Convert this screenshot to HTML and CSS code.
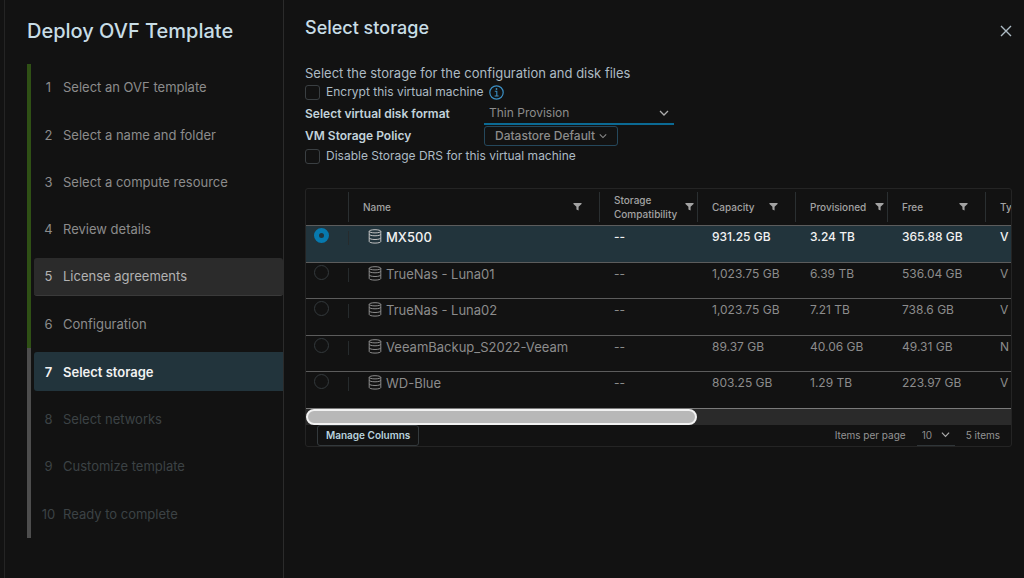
FILE: index.html
```html
<!doctype html>
<html lang="en">
<head>
    <meta charset="utf-8">
    <title>Deploy OVF Template</title>
    <link rel="stylesheet" href="styles.css">
</head>
<body>

<!-- shared icons -->
<svg class="defs" width="0" height="0">
    <symbol id="filter" viewBox="0 0 10 10">
        <path d="M0.5 1h9v1.3L6.2 5.4V9.5L3.8 8.3V5.4L0.5 2.3z" fill="currentColor"/>
    </symbol>
    <symbol id="store" viewBox="0 0 14 15">
        <g fill="none" stroke="currentColor" stroke-width="1">
            <ellipse cx="7" cy="2.3" rx="5.8" ry="1.6"/>
            <path d="M1.2 2.3v10.2c0 .9 2.6 1.6 5.8 1.6s5.8-.7 5.8-1.6V2.3"/>
            <path d="M1.2 5.2c0 .9 2.6 1.6 5.8 1.6s5.8-.7 5.8-1.6M1.2 8.9c0 .9 2.6 1.6 5.8 1.6s5.8-.7 5.8-1.6"/>
        </g>
    </symbol>
    <symbol id="caret" viewBox="0 0 10 10">
        <path d="M1 3l4 4 4-4" fill="none" stroke="currentColor" stroke-width="1.3"/>
    </symbol>
</svg>

<div class="wizard">
    <!-- left side: steps -->
    <aside class="side">
        <h1>Deploy OVF Template</h1>
        <ol class="steps">
            <li class="done"><a href="#"><span>1</span>Select an OVF template</a></li>
            <li class="done"><a href="#"><span>2</span>Select a name and folder</a></li>
            <li class="done"><a href="#"><span>3</span>Select a compute resource</a></li>
            <li class="done"><a href="#"><span>4</span>Review details</a></li>
            <li class="done hover"><a href="#"><span>5</span>License agreements</a></li>
            <li class="done"><a href="#"><span>6</span>Configuration</a></li>
            <li class="current"><a href="#"><span>7</span>Select storage</a></li>
            <li><a href="#"><span>8</span>Select networks</a></li>
            <li><a href="#"><span>9</span>Customize template</a></li>
            <li><a href="#"><span>10</span>Ready to complete</a></li>
        </ol>
    </aside>

    <!-- right side: current page -->
    <main class="page">
        <header class="top">
            <h2>Select storage</h2>
            <button class="close" type="button" aria-label="Close">
                <svg width="12" height="12" viewBox="0 0 12 12"><path d="M1 1l10 10M11 1L1 11" stroke="currentColor" stroke-width="1.4"/></svg>
            </button>
        </header>

        <form class="form">
            <p>Select the storage for the configuration and disk files</p>
            <div class="check">
                <input type="checkbox" id="encrypt">
                <label for="encrypt">Encrypt this virtual machine</label>
                <svg class="info" width="15" height="15" viewBox="0 0 15 15">
                    <circle cx="7.5" cy="7.5" r="6.7" fill="none" stroke="currentColor" stroke-width="1.2"/>
                    <path d="M5.8 6.3h2v4.6M5.6 11h4" fill="none" stroke="currentColor" stroke-width="1.1"/>
                    <circle cx="7.5" cy="4" r="0.9" fill="currentColor"/>
                </svg>
            </div>
            <div class="fields">
                <div class="field">
                    <label for="format">Select virtual disk format</label>
                    <div class="select format">
                        <select id="format"><option>Thin Provision</option></select>
                        <svg width="10" height="10"><use href="#caret"/></svg>
                    </div>
                </div>
                <div class="field">
                    <label for="policy">VM Storage Policy</label>
                    <button class="policy" id="policy" type="button">Datastore Default
                        <svg width="8" height="8"><use href="#caret"/></svg>
                    </button>
                </div>
            </div>
            <div class="check">
                <input type="checkbox" id="drs">
                <label for="drs">Disable Storage DRS for this virtual machine</label>
            </div>
        </form>

        <section class="grid">
            <div class="scroll">
                <table>
                    <colgroup>
                        <col class="c-pick"><col class="c-name"><col class="c-compat"><col class="c-cap">
                        <col class="c-prov"><col class="c-free"><col class="c-type">
                    </colgroup>
                    <thead>
                        <tr>
                            <th></th>
                            <th><div>Name<svg><use href="#filter"/></svg></div></th>
                            <th class="tight"><div>Storage Compatibility<svg><use href="#filter"/></svg></div></th>
                            <th><div>Capacity<svg><use href="#filter"/></svg></div></th>
                            <th class="tight"><div>Provisioned<svg><use href="#filter"/></svg></div></th>
                            <th><div>Free<svg><use href="#filter"/></svg></div></th>
                            <th><div>Ty</div></th>
                        </tr>
                    </thead>
                    <tbody>
                        <tr class="selected">
                            <td class="pick"><input type="radio" name="ds" aria-label="MX500" checked></td>
                            <td class="name"><svg><use href="#store"/></svg>MX500</td>
                            <td>--</td><td>931.25 GB</td><td>3.24 TB</td><td>365.88 GB</td><td>V</td>
                        </tr>
                        <tr>
                            <td class="pick"><input type="radio" name="ds" aria-label="TrueNas - Luna01"></td>
                            <td class="name"><svg><use href="#store"/></svg>TrueNas - Luna01</td>
                            <td>--</td><td>1,023.75 GB</td><td>6.39 TB</td><td>536.04 GB</td><td>V</td>
                        </tr>
                        <tr>
                            <td class="pick"><input type="radio" name="ds" aria-label="TrueNas - Luna02"></td>
                            <td class="name"><svg><use href="#store"/></svg>TrueNas - Luna02</td>
                            <td>--</td><td>1,023.75 GB</td><td>7.21 TB</td><td>738.6 GB</td><td>V</td>
                        </tr>
                        <tr>
                            <td class="pick"><input type="radio" name="ds" aria-label="VeeamBackup_S2022-Veeam"></td>
                            <td class="name"><svg><use href="#store"/></svg>VeeamBackup_S2022-Veeam</td>
                            <td>--</td><td>89.37 GB</td><td>40.06 GB</td><td>49.31 GB</td><td>N</td>
                        </tr>
                        <tr>
                            <td class="pick"><input type="radio" name="ds" aria-label="WD-Blue"></td>
                            <td class="name"><svg><use href="#store"/></svg>WD-Blue</td>
                            <td>--</td><td>803.25 GB</td><td>1.29 TB</td><td>223.97 GB</td><td>V</td>
                        </tr>
                    </tbody>
                </table>
            </div>
            <div class="bar"><div class="thumb"></div></div>
            <footer class="foot">
                <button class="manage" type="button">Manage Columns</button>
                <label for="size">Items per page</label>
                <div class="select size">
                    <select id="size"><option>10</option></select>
                    <svg width="9" height="9"><use href="#caret"/></svg>
                </div>
                <span>5 items</span>
            </footer>
        </section>
    </main>
</div>

</body>
</html>
```
FILE: styles.css
```css
* {
    box-sizing: border-box;
    margin: 0;
    padding: 0;
}
body {
    background: #121212;
    color: #adbbc4;
    font: 13px/16px Inter, "Open Sans", sans-serif;
}
button, select {
    font: inherit;
    color: inherit;
    background: none;
    border: 0;
    appearance: none;
}
.defs {
    position: absolute;
}
.wizard {
    display: flex;
    min-height: 100vh;
    margin-left: 4px;
    border-left: 1px solid #242424;
}

/* steps */
.side {
    display: flex;
    flex-direction: column;
    flex: 0 0 279px;
    padding: 16px 0 40px 22px;
    border-right: 1px solid #2b2b2b;
}
h1 {
    height: 48px;
    font-size: 20px;
    line-height: 30px;
    font-weight: 500;
    color: #c8dde6;
}
.steps {
    display: grid;
    grid-auto-rows: 1fr;
    flex: 1;
    list-style: none;
}
.steps li {
    display: flex;
    padding: 4px 0 5px 3px;
    border-left: 4px solid #4d4d4d;
}
.steps li.done {
    border-color: #2f5015;
}
.steps a {
    display: flex;
    flex: 1;
    align-items: center;
    gap: 6px;
    padding-left: 6px;
    border-radius: 3px;
    color: #3c4245;
    text-decoration: none;
}
.steps span {
    width: 17px;
    text-align: center;
}
.steps .done a {
    color: #8c8c8c;
}
.steps .hover a {
    background: #2b2b2b;
    border-bottom: 1px solid #3a3a3a;
    color: #b3b3b3;
}
.steps .current a {
    background: #22343c;
    border-radius: 3px 0 0 3px;
    color: #f2f2f2;
    font-weight: 600;
}

/* page */
.page {
    flex: 1;
    min-width: 0;
    padding: 16px 12px 24px 21px;
}
.top {
    display: flex;
    justify-content: space-between;
    height: 48px;
}
h2 {
    font-size: 18px;
    line-height: 24px;
    font-weight: 500;
    color: #c8dde6;
}
.close {
    height: 30px;
    color: #adbbc4;
}
.close svg {
    display: block;
}
.form {
    padding-bottom: 24px;
}
.form p {
    height: 20px;
    line-height: 18px;
}
.check {
    display: flex;
    align-items: center;
    gap: 6px;
    height: 16px;
    font-size: 12px;
}
.check input {
    appearance: none;
    width: 15px;
    height: 15px;
    border: 1px solid #3a3f42;
    border-radius: 3px;
}
.info {
    color: #3b8fc4;
}
.fields {
    padding: 3px 0 1px;
}
.field {
    display: flex;
    align-items: center;
    height: 22px;
    font-size: 12px;
}
.field label {
    width: 179px;
    font-weight: 600;
    color: #c2d2da;
}
.select {
    display: flex;
    align-items: center;
    position: relative;
    color: #8c8c8c;
}
.select select {
    width: 100%;
}
.select svg {
    position: absolute;
    right: 5px;
    color: #adadad;
}
.format {
    width: 190px;
    height: 22px;
    border-bottom: 2px solid #0b6a94;
}
.format select {
    padding-left: 5px;
}
.policy {
    display: flex;
    align-items: center;
    gap: 4px;
    height: 20px;
    padding: 0 10px;
    border: 1px solid #25485c;
    border-radius: 3px;
    color: #8c8c8c;
    font-weight: 500;
}

/* datastore table */
.grid {
    border: 1px solid #242424;
    border-radius: 3px;
}
.scroll {
    overflow: hidden;
}
table {
    width: 1271px;
    table-layout: fixed;
    border-collapse: collapse;
}
.c-pick { width: 42px; }
.c-name { width: 251px; }
.c-compat { width: 98px; }
.c-cap { width: 98px; }
.c-prov { width: 92px; }
.c-free { width: 98px; }
th {
    height: 36px;
    padding: 2px 0;
    font-size: 10px;
    line-height: 14px;
    font-weight: 500;
    text-align: left;
    color: #a3a3a3;
}
th div {
    display: flex;
    align-items: center;
    justify-content: space-between;
    height: 30px;
    padding: 0 17px 0 14px;
    border-left: 1px solid #2a2f31;
}
th.tight div {
    padding-right: 3px;
}
th svg {
    flex: none;
    width: 9px;
    height: 9px;
}
tbody tr {
    height: 37px;
    border-top: 1px solid #5c5c5c;
}
tbody tr:nth-child(even) {
    height: 36px;
}
tbody tr:last-child {
    border-bottom: 1px solid #7a7a7a;
}
td {
    padding: 2px 0 0 15px;
    line-height: 18px;
    font-size: 12px;
    vertical-align: top;
    color: #8c8c8c;
}
.pick {
    padding: 2px 0 0 8px;
}
.pick input {
    display: block;
    appearance: none;
    width: 15px;
    height: 15px;
    border: 1px solid #33393c;
    border-radius: 50%;
}
.pick input:checked {
    border: 5px solid #0779ae;
    background: #22343c;
}
.name {
    padding-left: 20px;
    font-size: 13px;
    background: linear-gradient(#262b2d, #262b2d) no-repeat 0 5px / 1px 14px;
}
.name svg {
    width: 14px;
    height: 15px;
    margin-right: 4px;
    vertical-align: -2px;
}
.selected {
    background: #22343c;
}
.selected td {
    color: #f2f2f2;
    font-weight: 500;
}
.selected svg {
    color: #c2c2c2;
}
.bar {
    height: 16px;
    background: #2a2a2a;
}
.thumb {
    width: 55.5%;
    height: 16px;
    border: 2px solid #f2f2f2;
    border-radius: 8px;
    background: #b8b8b8;
}
.foot {
    display: flex;
    align-items: center;
    height: 21px;
    padding: 0 11px;
    font-size: 10px;
    color: #949494;
}
.manage {
    height: 21px;
    margin-right: auto;
    padding: 0 8px;
    border: 1px solid #33393c;
    border-radius: 3px;
    color: #b9d3df;
    font-weight: 600;
}
.size {
    width: 38px;
    height: 21px;
    margin: 0 11px;
    border-bottom: 1px solid #2f3538;
}
.size select {
    padding-left: 5px;
}
```
